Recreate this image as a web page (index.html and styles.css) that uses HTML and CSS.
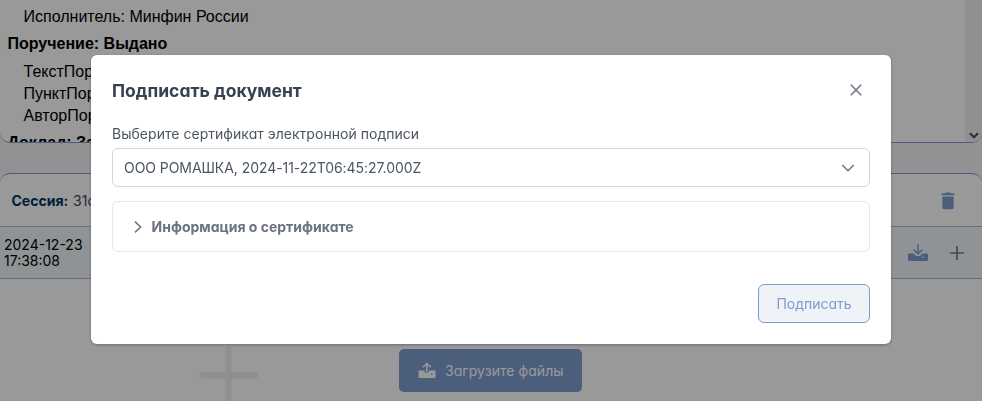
FILE: index.html
```html
<!DOCTYPE html>
<html lang="ru">
<head>
<meta charset="utf-8">
<title>Подписать документ</title>
<link rel="stylesheet" href="styles.css">
</head>
<body>
<main class="page">
  <section class="preview">
    <div class="preview-text">
      <p class="item">Исполнитель: Минфин России</p>
      <p class="heading">Поручение: Выдано</p>
      <p class="item">ТекстПор</p>
      <p class="item">ПунктПор</p>
      <p class="item">АвторПор</p>
      <p class="heading last">Доклад: За</p>
    </div>
    <div class="scrollbar">
      <svg width="10" height="7" viewBox="0 0 10 7"><path d="M1 1.2 5 5.2 9 1.2" fill="none" stroke="#505050" stroke-width="2.2"/></svg>
    </div>
  </section>
  <section class="session">
    <header class="session-head">
      <span><b>Сессия:</b> 31с</span>
      <svg class="trash" width="14" height="18" viewBox="0 0 14 18"><path d="M0.5 1.5H4L5 .5H9L10 1.5H13.500V3.300H.5ZM1.300 4.500H12.700V15.500Q12.700 17.200 11 17.200H3Q1.300 17.200 1.300 15.500Z" fill="#7d9dcf"/></svg>
    </header>
    <div class="session-row">
      <span class="date">2024-12-23 17:38:08</span>
      <div class="actions">
        <svg width="20" height="18" viewBox="0 0 20 18"><path fill="#7d9dcf" d="M1 9.500H5.500L8 12H12L14.500 9.500H19Q20 9.500 20 10.500V16Q20 17 19 17H1Q0 17 0 16V10.500Q0 9.500 1 9.500ZM14.500 12.500V14H16V12.500Z" fill-rule="evenodd"/><path d="M10 .5V9.500M5.500 5.500 10 9.800 14.500 5.500" fill="none" stroke="#7d9dcf" stroke-width="1.500"/></svg>
        <svg width="14" height="14" viewBox="0 0 14 14"><path d="M7 0V14M0 7H14" stroke="#777b82" stroke-width="1.700"/></svg>
      </div>
    </div>
    <div class="upload-area">
      <svg class="big-plus" width="59" height="59" viewBox="0 0 59 59"><path d="M29.500 3V56M3 29.500H56" stroke="#eeeef2" stroke-width="6" stroke-linecap="round"/></svg>
      <button class="upload">
        <svg width="18" height="17" viewBox="0 0 18 17"><path d="M1 8.500H6.500V10.500H11V8.500H17Q17.500 8.500 17.500 9V15Q17.500 16 16.500 16H1.500Q.5 16 .5 15V9Q.5 8.500 1 8.500ZM13 11.500V13H14.500V11.500Z" fill="#fff" fill-rule="evenodd"/><path d="M8.800 10V1.500M4.800 5.200 8.800 1.500 12.800 5.200" fill="none" stroke="#fff" stroke-width="1.500"/></svg>
        <span>Загрузите файлы</span>
      </button>
    </div>
  </section>
</main>
<div class="mask">
  <div class="dialog" role="dialog">
    <header class="dialog-head">
      <h1>Подписать документ</h1>
      <svg width="12" height="12" viewBox="0 0 12 12"><path d="M.8.8 11.200 11.200M11.200.8.8 11.200" stroke="#6b7280" stroke-width="1.500"/></svg>
    </header>
    <label class="label">Выберите сертификат электронной подписи</label>
    <div class="select">
      <span class="select-value">ООО РОМАШКА, 2024-11-22T06:45:27.000Z</span>
      <svg width="14" height="8" viewBox="0 0 14 8"><path d="M1.200 1 7 6.800 12.800 1" fill="none" stroke="#6b7280" stroke-width="1.500"/></svg>
    </div>
    <div class="panel">
      <svg width="8" height="12" viewBox="0 0 8 12"><path d="M1 .6 6.600 6 1 11.400" fill="none" stroke="#6b7280" stroke-width="1.500"/></svg>
      <span class="panel-title">Информация о сертификате</span>
    </div>
    <footer class="dialog-foot"><button class="sign"><span>Подписать</span></button></footer>
  </div>
</div>
</body>
</html>
```

FILE: styles.css
```css
* { box-sizing: border-box; }
body {
  margin: 0;
  height: 401px;
  overflow: hidden;
  background: #f4f3f9;
  font-family: Inter, sans-serif;
  font-feature-settings: "cv11";
  font-size: 14px;
}
svg { display: block; flex: none; }
p, h1 { margin: 0; }
button { font: inherit; font-feature-settings: inherit; }
.page { height: 401px; overflow: hidden; }
.preview {
  display: flex;
  height: 143px;
  overflow: hidden;
  background: #fff;
  border: solid #7d9dcf;
  border-width: 0 0 1px;
  border-radius: 0 0 10px 10px;
}
.preview-text {
  flex: 1;
  padding: 6px 0 0 7.5px;
  font: 16px/22px "Liberation Sans", sans-serif;
}
.item { padding-left: 16px; }
.heading { font-weight: 700; padding: 5px 0 6px; }
.heading.last { white-space: nowrap; }
.scrollbar {
  width: 17px;
  background: #f0f0f0;
  display: flex;
  align-items: flex-end;
  justify-content: center;
  padding-bottom: 3px;
}
.session {
  margin-top: 30px;
  height: 228px;
  overflow: hidden;
  background: #fff;
  border-top: 1px solid #7d9dcf;
  border-radius: 10px 10px 0 0;
}
.session-head {
  display: flex;
  align-items: center;
  justify-content: space-between;
  height: 52px;
  padding: 1px 27px 0 11.5px;
  color: #40485a;
}
.session-head b { color: #003462; margin-right: 1px; }
.session-row {
  display: flex;
  align-items: center;
  justify-content: space-between;
  height: 53px;
  padding: 0 18px 0 4px;
  border: solid #9fb8df;
  border-width: 1px 0;
  background: #eef5f9;
}
.date { width: 82px; line-height: 16px; }
.actions { display: flex; align-items: center; gap: 22px; }
.upload-area {
  display: flex;
  align-items: flex-start;
  padding: 67px 0 0 199px;
}
.upload {
  display: flex;
  align-items: center;
  gap: 9px;
  width: 183px;
  height: 43px;
  margin: 3px 0 0 141px;
  padding: 0 0 0 19px;
  border: 0;
  border-radius: 5px;
  background: #7d9dcf;
  color: #fff;
  letter-spacing: .05px;
}
.mask {
  position: fixed;
  inset: 0;
  display: flex;
  align-items: flex-start;
  justify-content: center;
  padding-top: 55px;
  background: rgba(0, 0, 0, .4);
}
.dialog {
  width: 800px;
  height: 289px;
  padding: 0 21px;
  background: #fff;
  border-radius: 6px;
  box-shadow: 0 1px 3px rgba(0, 0, 0, .3);
  color: #4b5563;
}
.dialog-head {
  display: flex;
  align-items: center;
  justify-content: space-between;
  height: 70px;
  padding-right: 8px;
}
.dialog-head h1 { font-size: 17.5px; line-height: 22px; padding-top: 2px; color: #374151; }
.label { display: block; height: 23px; line-height: 18px; letter-spacing: .03px; }
.select {
  display: flex;
  align-items: center;
  justify-content: space-between;
  height: 39px;
  padding: 0 14px 0 11px;
  border: 1px solid #d1d5db;
  border-radius: 6px;
}
.select-value { letter-spacing: -.06px; }
.panel {
  display: flex;
  align-items: center;
  gap: 9.5px;
  height: 51px;
  margin-top: 14px;
  padding-left: 21px;
  border: 1px solid #e5e7eb;
  border-radius: 6px;
  color: #6b7280;
}
.panel-title { font-weight: 700; }
.dialog-foot { display: flex; justify-content: flex-end; margin-top: 32px; }
.sign {
  width: 112px;
  height: 39px;
  padding: 0;
  border: 1px solid #7d9dcf;
  border-radius: 6px;
  background: #eff3f8;
  color: #7d9dcf;
}
```
